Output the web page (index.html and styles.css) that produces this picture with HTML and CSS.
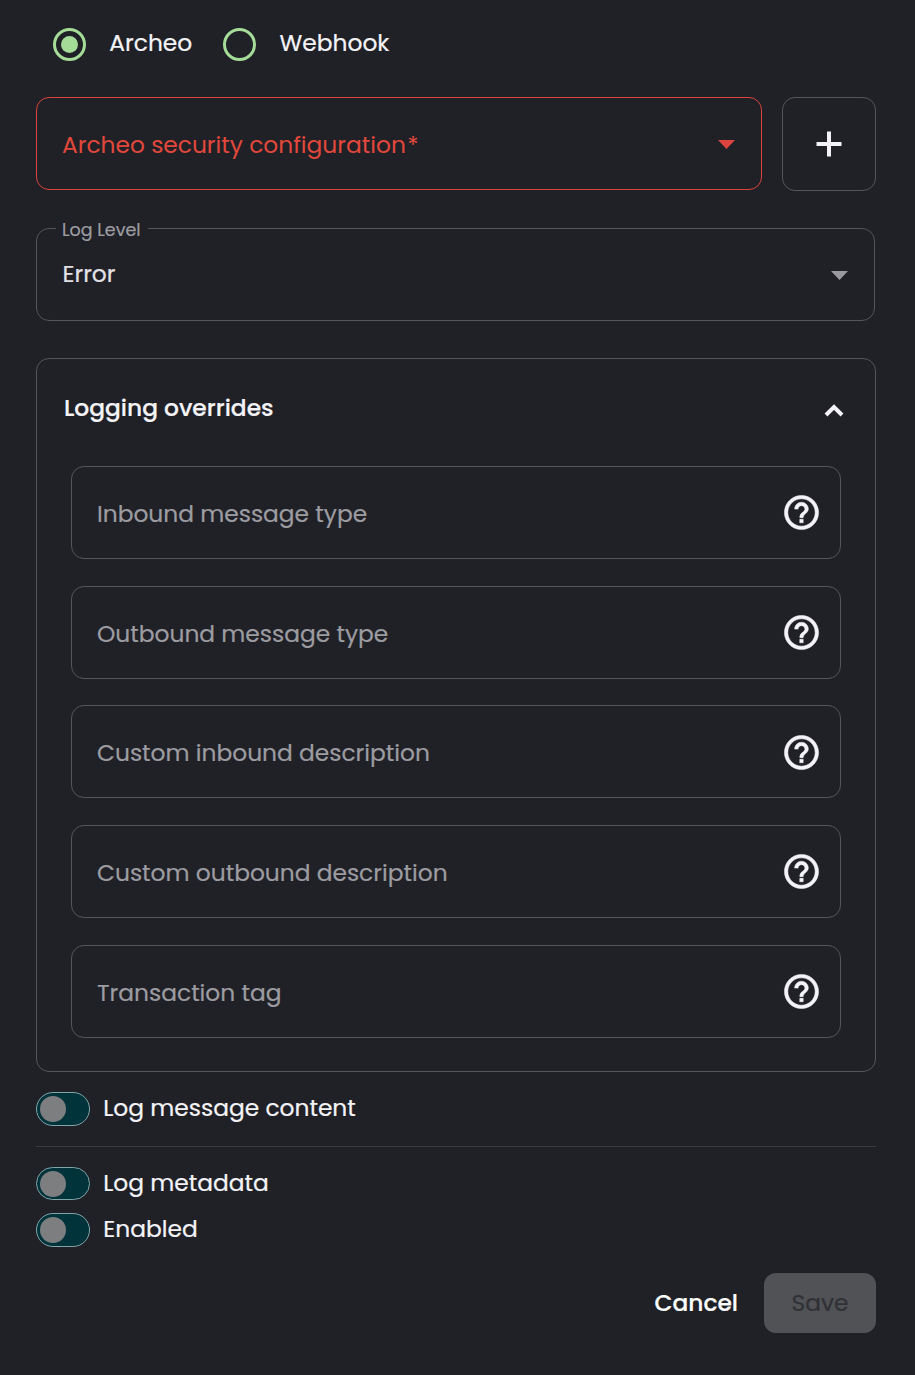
FILE: index.html
```html
<!DOCTYPE html>
<html lang="en">
<head>
<meta charset="utf-8">
<title>Logging settings</title>
<link rel="stylesheet" href="styles.css">
</head>
<body>
<svg class="sprite" aria-hidden="true">
  <symbol id="help" viewBox="0 0 24 24"><path d="M11 18h2v-2h-2v2zm1-16C6.480 2 2 6.480 2 12s4.480 10 10 10 10-4.480 10-10S17.520 2 12 2zm0 18c-4.410 0-8-3.590-8-8s3.590-8 8-8 8 3.590 8 8-3.590 8-8 8zm0-14c-2.210 0-4 1.790-4 4h2c0-1.100.9-2 2-2s2 .9 2 2c0 2-3 1.750-3 5h2c0-2.250 3-2.500 3-5 0-2.210-1.790-4-4-4z"/></symbol>
</svg>
<form class="form">
  <div class="radios">
    <label class="radio"><span class="radio-ring"><span class="radio-dot"></span></span><span class="radio-text">Archeo</span></label>
    <label class="radio"><span class="radio-ring"></span><span class="radio-text">Webhook</span></label>
  </div>

  <div class="config-row">
    <div class="field field-error"><span>Archeo security configuration<span class="required">*</span></span><span class="caret"></span></div>
    <button class="add" type="button" aria-label="Add"><svg class="plus" viewBox="0 0 26 26"><path d="M0.500 13h25M13 0.500v25"/></svg></button>
  </div>

  <div class="field field-level"><span class="floating">Log Level</span><span class="value">Error</span><span class="caret"></span></div>

  <section class="panel">
    <header class="panel-head"><h2 class="panel-title">Logging overrides</h2><svg class="chevron" viewBox="0 0 20 13"><path d="M2 11l8-8 8 8"/></svg></header>
    <div class="panel-body">
      <div class="field"><span>Inbound message type</span><svg class="help"><use href="#help"/></svg></div>
      <div class="field"><span>Outbound message type</span><svg class="help"><use href="#help"/></svg></div>
      <div class="field"><span>Custom inbound description</span><svg class="help"><use href="#help"/></svg></div>
      <div class="field"><span>Custom outbound description</span><svg class="help"><use href="#help"/></svg></div>
      <div class="field"><span>Transaction tag</span><svg class="help"><use href="#help"/></svg></div>
    </div>
  </section>

  <label class="toggle"><span class="track"><span class="thumb"></span></span><span class="toggle-text">Log message content</span></label>
  <hr class="divider">
  <label class="toggle"><span class="track track-short"><span class="thumb"></span></span><span class="toggle-text">Log metadata</span></label>
  <label class="toggle toggle-last"><span class="track"><span class="thumb"></span></span><span class="toggle-text">Enabled</span></label>

  <div class="actions"><button class="cancel" type="button">Cancel</button><button class="save" type="button">Save</button></div>
</form>
</body>
</html>
```
FILE: styles.css
```css
* { box-sizing: border-box; }
body { margin: 0; background: #202027; color: #f4f4f8; font: 400 23.330px/30px Poppins, Inter, sans-serif; -webkit-text-stroke: 0.200px currentColor; }
.sprite { position: absolute; width: 0; height: 0; }
.form { display: flex; flex-direction: column; width: 915px; height: 1375px; padding: 28px 39px 0 36px; }
h2, button { margin: 0; font: inherit; color: inherit; }

.radios { display: flex; height: 33px; padding-left: 17px; gap: 31px; }
.radio { display: flex; align-items: center; gap: 23.300px; }
.radio-ring { display: flex; align-items: center; justify-content: center; width: 33px; height: 33px; border: 3px solid #a4dc98; border-radius: 50%; }
.radio-dot { width: 17px; height: 17px; border-radius: 50%; background: #a4dc98; }
.radio-text { padding-bottom: 4px; }

.field { position: relative; display: flex; align-items: center; justify-content: space-between; height: 93px; padding: 2px 26px 0 25px; border: 1px solid #55565b; border-radius: 13px; color: #9c9ca1; white-space: nowrap; }
.caret { width: 17px; height: 9px; background: #99999e; clip-path: polygon(0 0, 100% 0, 50% 100%); }

.config-row { display: flex; gap: 20px; margin-top: 36px; }
.config-row .field { width: 726px; }
.field-error { border-color: #d9453c; color: #e0483b; -webkit-text-stroke: 0; }
.field-error .caret { background: #dc453d; }
.required { margin-left: 1.500px; }
.add { display: flex; align-items: center; justify-content: center; width: 94px; height: 94px; padding: 0; border: 1px solid #55565b; border-radius: 13px; background: none; }
.plus { width: 26px; height: 26px; fill: none; stroke: #f4f4f8; stroke-width: 4; }

.field-level { width: 839px; margin-top: 37px; }
.floating { position: absolute; left: 19px; top: -14px; width: 92px; padding-left: 6px; background: #202027; font-size: 17.500px; line-height: 30px; }
.value { color: #e2e2e6; padding: 0 0 3px 0.500px; }

.panel { height: 714px; margin-top: 37px; border: 1px solid #55565b; border-radius: 13px; }
.panel-head { display: flex; align-items: center; justify-content: space-between; height: 107px; padding: 0 31px 9px 27px; }
.panel-title { font-weight: 500; }
.chevron { width: 20px; height: 13px; margin-top: 4px; fill: none; stroke: #f4f4f8; stroke-width: 4; }
.panel-body { display: flex; flex-direction: column; gap: 26.700px; padding: 0 34px; }
.panel-body .field { padding-top: 2.800px; padding-right: 18px; flex: none; }
.help { width: 41px; height: 41px; margin-top: -2.400px; fill: #f4f4f8; stroke: #f4f4f8; stroke-width: 0.300; }

.toggle { display: flex; align-items: center; gap: 13.300px; height: 34px; margin-top: 20px; }
.track { display: flex; align-items: center; width: 54px; height: 34px; padding-left: 3px; border: 1px solid #7fa5a8; border-radius: 17px; background: #00333a; }
.track-short { height: 33px; margin-bottom: 1px; }
.thumb { width: 26px; height: 26px; border-radius: 50%; background: #7c7e80; }
.toggle-text { padding-bottom: 3px; }
.toggle-last { margin-top: 12px; }
.divider { width: 840px; height: 1px; margin: 20px 0 0; border: 0; background: #3c3c40; }

.actions { display: flex; justify-content: flex-end; gap: 26px; margin-top: 26px; }
.cancel { padding: 0; border: 0; background: none; color: #fff; font-weight: 500; }
.save { width: 112px; height: 60px; padding: 0; border: 0; border-radius: 12px; background: #515256; color: #303136; }
```
